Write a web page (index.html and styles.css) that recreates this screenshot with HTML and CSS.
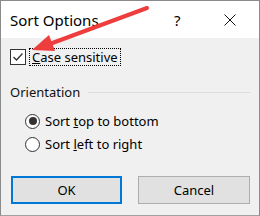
FILE: index.html
```html
<!DOCTYPE html>
<html>
<head>
	<title>Sort Options</title>
	<link rel="stylesheet" href="styles.css">
</head>
<body>
	<div class="dialog">
		<div class="titlebar">
			<span class="title">Sort Options</span>
			<span class="help">?</span>
			<svg class="close" width="12" height="12" viewBox="0 0 12 12">
				<path d="M0.5 0.5 L11.5 11.5 M11.5 0.5 L0.5 11.5" stroke="#111" stroke-width="1" fill="none"/>
			</svg>
		</div>

		<div class="content">
			<div class="check-row">
				<span class="checkbox">
					<svg width="14" height="14" viewBox="0 0 14 14">
						<path d="M2.5 7 L5.5 10 L11.5 3.5" stroke="#333" stroke-width="1.3" fill="none"/>
					</svg>
				</span>
				<span class="focus"><u>C</u>ase sensitive</span>
			</div>

			<div class="group">
				<span>Orientation</span>
				<span class="group-line"></span>
			</div>

			<div class="radios">
				<div class="radio-row">
					<span class="radio checked"></span>
					<span>Sort <u>t</u>op to bottom</span>
				</div>
				<div class="radio-row">
					<span class="radio"></span>
					<span>Sort <u>l</u>eft to right</span>
				</div>
			</div>

			<div class="buttons">
				<button class="btn default">OK</button>
				<button class="btn">Cancel</button>
			</div>
		</div>

		<!-- red annotation arrow over the dialog -->
		<svg class="arrow" width="260" height="216" viewBox="0 0 260 216">
			<line x1="146" y1="7" x2="46" y2="44" stroke="#ee3d3d" stroke-width="4" stroke-linecap="round"/>
			<polygon points="31,49 48,34 54,50" fill="#ee3d3d"/>
		</svg>
	</div>
</body>
</html>
```

FILE: styles.css
```css
body {
	margin: 0;
	padding: 0;
	font-family: "Noto Sans", "Open Sans", sans-serif;
	color: #000;
}

.dialog {
	position: relative;
	width: 260px;
	height: 216px;
	box-sizing: border-box;
	background-color: #f0f0f0;
	border: 1px solid #8a8a8a;
	border-bottom-color: #a0a0a0;
	overflow: hidden;
}

.titlebar {
	display: flex;
	align-items: center;
	height: 37px;
	background-color: #fff;
	padding-left: 9px;
}

.title {
	font-size: 15px;
	flex: 1;
}

.help {
	font-size: 15px;
	width: 50px;
}

.close {
	margin-right: 23px;
}

.content {
	padding: 9px 0 0 9px;
	font-size: 13px;
}

.check-row {
	display: flex;
	align-items: center;
	height: 20px;
}

.checkbox {
	display: flex;
	align-items: center;
	justify-content: center;
	width: 14px;
	height: 14px;
	border: 1px solid #333;
	background-color: #fff;
}

.focus {
	margin-left: 3px;
	padding: 0 2px;
	line-height: 16px;
	border: 1px dotted #000;
}

.group {
	display: flex;
	align-items: center;
	height: 16px;
	margin-top: 17px;
	margin-right: 9px;
	color: #111;
}

.group-line {
	flex: 1;
	height: 1px;
	margin-left: 8px;
	background-color: #dcdcdc;
}

.radios {
	display: flex;
	flex-direction: column;
	gap: 5px;
	margin-top: 12px;
	margin-left: 15px;
}

.radio-row {
	display: flex;
	align-items: center;
	gap: 5px;
	height: 18px;
}

.radio {
	display: flex;
	align-items: center;
	justify-content: center;
	width: 13px;
	height: 13px;
	border: 1px solid #333;
	border-radius: 50%;
	background-color: #fff;
}

.radio.checked::after {
	content: "";
	width: 8px;
	height: 8px;
	border-radius: 50%;
	background-color: #333;
}

.buttons {
	display: flex;
	gap: 16px;
	margin-top: 23px;
	margin-left: 1px;
}

.btn {
	width: 112px;
	height: 28px;
	box-sizing: border-box;
	background-color: #e1e1e1;
	border: 1px solid #adadad;
	font-family: "Noto Sans", "Open Sans", sans-serif;
	font-size: 13px;
	color: #000;
	padding: 0;
}

.btn.default {
	width: 111px;
	border: 2px solid #0078d7;
}

.arrow {
	position: absolute;
	left: 0;
	top: 0;
	pointer-events: none;
}
```
